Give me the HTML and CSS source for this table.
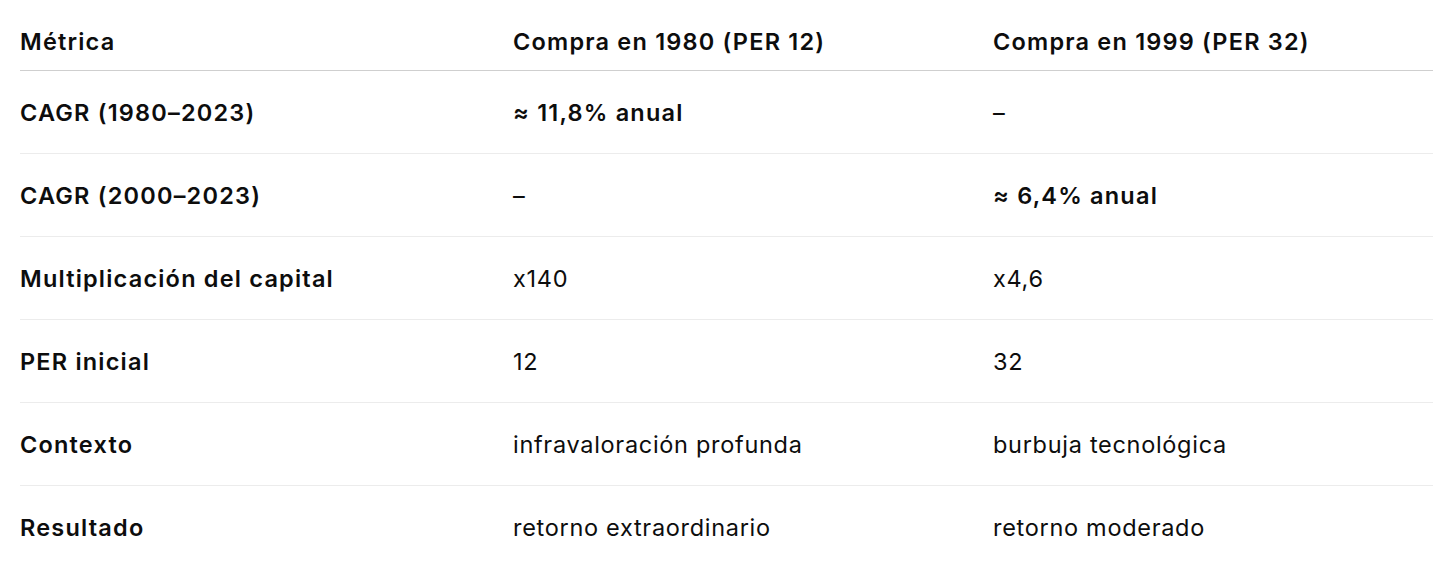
FILE: index.html
```html
<!DOCTYPE html>
<html lang="es">
<head>
<meta charset="utf-8">
<link rel="stylesheet" href="styles.css">
</head>
<body>
<div class="table">
  <div class="row head">
    <div class="cell">Métrica</div>
    <div class="cell">Compra en 1980 (PER 12)</div>
    <div class="cell">Compra en 1999 (PER 32)</div>
  </div>
  <div class="row">
    <div class="cell b">CAGR (1980–2023)</div>
    <div class="cell b">≈ 11,8% anual</div>
    <div class="cell">–</div>
  </div>
  <div class="row">
    <div class="cell b">CAGR (2000–2023)</div>
    <div class="cell">–</div>
    <div class="cell b">≈ 6,4% anual</div>
  </div>
  <div class="row">
    <div class="cell b">Multiplicación del capital</div>
    <div class="cell">x140</div>
    <div class="cell">x4,6</div>
  </div>
  <div class="row">
    <div class="cell b">PER inicial</div>
    <div class="cell">12</div>
    <div class="cell">32</div>
  </div>
  <div class="row">
    <div class="cell b">Contexto</div>
    <div class="cell">infravaloración profunda</div>
    <div class="cell">burbuja tecnológica</div>
  </div>
  <div class="row last">
    <div class="cell b">Resultado</div>
    <div class="cell">retorno extraordinario</div>
    <div class="cell">retorno moderado</div>
  </div>
</div>
</body>
</html>
```

FILE: styles.css
```css
html, body {
  margin: 0;
  padding: 0;
  background: #ffffff;
}
body {
  font-family: Inter, "Liberation Sans", sans-serif;
  color: #0d0d0d;
  font-size: 23.5px;
}
.table {
  margin: 0 23px 0 20px;
  display: flex;
  flex-direction: column;
}
.row {
  display: grid;
  grid-template-columns: 493px 480px 1fr;
  align-items: center;
  height: 82px;
  border-bottom: 1px solid #ececec;
  letter-spacing: 0.7px;
}
.row.head {
  height: 58px;
  margin-top: 12px;
  border-bottom: 1px solid #cfcfcf;
  font-weight: 600;
  letter-spacing: 1.2px;
}
.row.last {
  border-bottom: none;
}
.cell.b {
  font-weight: 600;
  letter-spacing: 1.2px;
}
```
